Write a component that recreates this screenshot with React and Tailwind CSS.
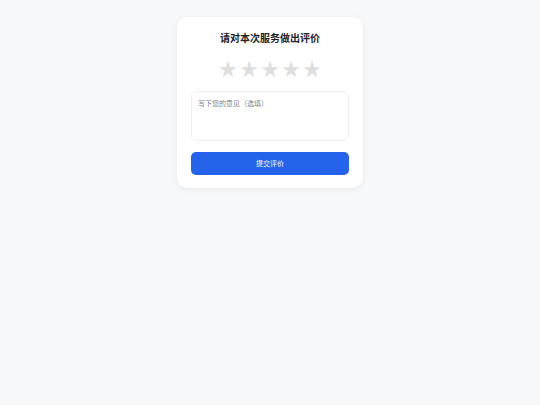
import { useState } from "react";

const App = () => {
  const [rating, setRating] = useState(0);
  const [comment, setComment] = useState("");

  return (
    <div className="min-h-screen bg-[#f7f8fa] flex justify-center pt-[17px] font-['Noto_Sans_CJK_SC',sans-serif]">
      <div className="w-[186px] h-[171px] bg-white rounded-[10px] shadow-[0_1px_6px_rgba(0,0,0,0.07)] px-[14px] pt-[13px]">
        {/* titre */}
        <h2 className="text-center text-[10px] leading-[16px] font-bold text-[#1f2328]">
          请对本次服务做出评价
        </h2>

        {/* étoiles */}
        <div className="flex justify-center mt-[12px]">
          {[1, 2, 3, 4, 5].map((n) => (
            <button
              key={n}
              onClick={() => setRating(n)}
              className={`w-[21px] h-[21px] text-[18px] leading-[21px] flex items-center justify-center ${
                n <= rating ? "text-[#fbbf24]" : "text-[#dedede]"
              }`}
            >
              ★
            </button>
          ))}
        </div>

        {/* commentaire */}
        <textarea
          value={comment}
          onChange={(e) => setComment(e.target.value)}
          placeholder="写下您的意见（选填）"
          className="mt-[12px] block w-full h-[50px] resize-none rounded-[6px] border border-[#eceef0] px-[6px] py-[6px] text-[7px] leading-[10px] text-[#333] placeholder:text-[#7a7f86] outline-none"
        />

        {/* bouton */}
        <button className="mt-[11px] w-full h-[23px] rounded-[5px] bg-[#2563eb] text-white text-[7px] leading-[23px]">
          提交评价
        </button>
      </div>
    </div>
  );
};

export default App;
